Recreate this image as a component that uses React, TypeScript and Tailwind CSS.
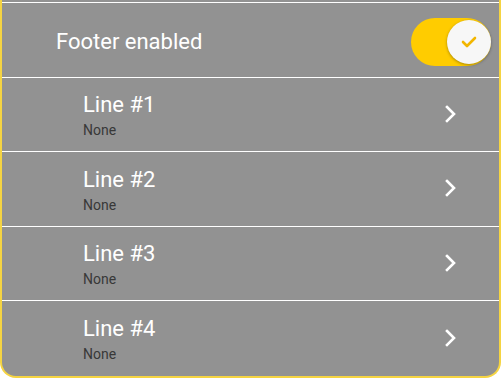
import React from "react";

const rows = [
  { title: "Line #1", h: "h-[74px]" },
  { title: "Line #2", h: "h-[75px]" },
  { title: "Line #3", h: "h-[74px]" },
  { title: "Line #4", h: "h-[76px]" },
];

function Chevron() {
  return (
    <svg width="14" height="18" viewBox="0 0 14 18" className="block mt-[-2px]">
      <polyline points="3,2 10,9 3,16" fill="none" stroke="#ffffff" strokeWidth="2.6" strokeLinecap="square" strokeLinejoin="miter" />
    </svg>
  );
}

export default function App() {
  return (
    <div className="w-[501px] h-[379px] bg-white" style={{ fontFamily: "Roboto, 'Noto Sans', sans-serif" }}>
      <div className="h-[378px] border-x-2 border-b-2 border-[#f5d442] rounded-b-[16px] bg-[#929292] overflow-hidden flex flex-col">
        <div className="h-[2px] shrink-0" />
        <div className="h-[75px] shrink-0 border-t border-white flex items-center justify-between pl-[54px] pr-[8px]">
          <span className="text-[22px] text-white leading-none mt-[4px]">Footer enabled</span>
          <div className="relative w-[80px] h-[48px] rounded-full bg-[#ffcc00] mt-[4px]">
            <div className="absolute right-0 top-[2px] w-[44px] h-[44px] rounded-full bg-[#f7f7f7] shadow-[0_1px_3px_rgba(0,0,0,0.35)] flex items-center justify-center">
              <svg width="16" height="12" viewBox="0 0 16 12">
                <polyline points="2,6 6,10 14,2" fill="none" stroke="#f2b600" strokeWidth="2.6" strokeLinecap="round" strokeLinejoin="round" />
              </svg>
            </div>
          </div>
        </div>
        {rows.map((r) => (
          <div key={r.title} className={`${r.h} shrink-0 border-t border-white flex items-center justify-between pl-[81px] pr-[41px]`}>
            <div className="flex flex-col mt-[2px]">
              <span className="text-[22px] leading-[26px] text-white">{r.title}</span>
              <span className="text-[14px] leading-[18px] text-[#383838] mt-[3px]">None</span>
            </div>
            <Chevron />
          </div>
        ))}
      </div>
    </div>
  );
}
